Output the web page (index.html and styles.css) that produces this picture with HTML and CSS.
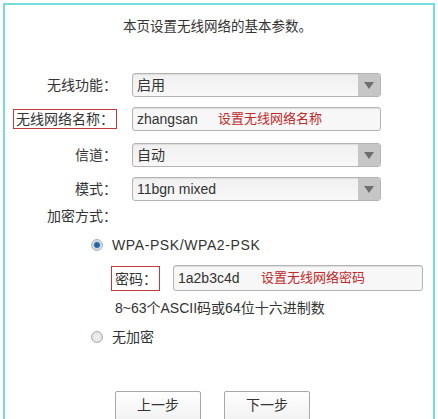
FILE: index.html
```html
<!DOCTYPE html>
<html lang="zh-CN">
  <head>
    <meta charset="UTF-8" />
    <title>无线设置</title>
    <link rel="stylesheet" href="styles.css">
  </head>
  <body>
    <section class="frame">
      <p class="intro">本页设置无线网络的基本参数。</p>
      <div class="form">
        <div class="row">
          <span class="label">无线功能：</span>
          <div class="select"><span>启用</span><i class="arrow"></i></div>
        </div>
        <div class="row">
          <span class="label"><b class="mark">无线网络名称：</b></span>
          <div class="input"><span class="val">zhangsan</span><span class="hint">设置无线网络名称</span></div>
        </div>
        <div class="row">
          <span class="label">信道：</span>
          <div class="select"><span>自动</span><i class="arrow"></i></div>
        </div>
        <div class="row">
          <span class="label">模式：</span>
          <div class="select"><span>11bgn mixed</span><i class="arrow"></i></div>
        </div>
        <div class="caption">加密方式：</div>
        <div class="radio-row">
          <i class="radio on"></i><span class="latin">WPA-PSK/WPA2-PSK</span>
        </div>
        <div class="pwd-row">
          <b class="mark">密码：</b>
          <div class="input wide"><span class="val short">1a2b3c4d</span><span class="hint">设置无线网络密码</span></div>
        </div>
        <div class="note">8~63个ASCII码或64位十六进制数</div>
        <div class="radio-row plain">
          <i class="radio"></i><span>无加密</span>
        </div>
      </div>
      <div class="buttons">
        <button>上一步</button>
        <button>下一步</button>
      </div>
    </section>
  </body>
</html>
```

FILE: styles.css
```css
* {
  margin: 0px;
  padding: 0px;
  box-sizing: border-box;
}
body {
  background-color: #fff;
  font-family: "Liberation Sans", "Noto Sans CJK SC", sans-serif;
  font-size: 14px;
  color: #333;
  line-height: 18px;
}
.frame {
  margin: 3px 3px 0 3px;
  height: 416px;
  border: 2px solid #74dcdc;
  border-bottom: none;
  overflow: hidden;
}
.intro {
  text-align: center;
  margin-top: 13px;
  padding-right: 3px;
  font-size: 13.5px;
}
.form {
  margin-top: 37px;
}
.row {
  display: flex;
  align-items: center;
  height: 24px;
  margin-bottom: 10px;
}
.label {
  width: 117px;
  flex-shrink: 0;
  text-align: right;
  padding-right: 5px;
}
.mark {
  font-weight: normal;
  border: 1px solid #c0393b;
  padding: 1px 2px 1px 2px;
}
.select, .input {
  width: 249px;
  height: 24px;
  margin-left: 10px;
  border: 1px solid #b4b4b4;
  border-radius: 3px;
  background: linear-gradient(#f0f0f0, #f8f8f8);
  display: flex;
  align-items: center;
  padding-left: 4px;
  box-shadow: inset 0 1px 1px #ddd;
}
.select span {
  flex: 1;
}
.arrow {
  width: 22px;
  height: 22px;
  background: #c6c6c6;
  position: relative;
}
.arrow::after {
  content: "";
  position: absolute;
  left: 6px;
  top: 8px;
  border-left: 5px solid transparent;
  border-right: 5px solid transparent;
  border-top: 7px solid #6e6e6e;
}
.input {
  background: #f7f7f7;
}
.val {
  width: 81px;
}
.val.short {
  width: 83px;
}
.hint {
  color: #c0282a;
  font-size: 13px;
}
.row:nth-child(2) {
  margin-bottom: 12px;
}
.row:nth-child(4) {
  margin-bottom: 6px;
}
.caption {
  margin-left: 42px;
  height: 18px;
}
.radio-row {
  display: flex;
  align-items: center;
  gap: 9px;
  margin: 11px 0 0 86px;
  height: 18px;
}
.latin {
  letter-spacing: 0.6px;
}
.radio {
  width: 12px;
  height: 12px;
  border-radius: 50%;
  border: 1px solid #a8b0b8;
  background: radial-gradient(#f4f4f4, #d8d8d8);
}
.radio.on {
  background: radial-gradient(#1f5f9a 0, #2c6ea8 2.5px, #c8d4de 3.5px, #e8eef2 6px);
}
.pwd-row {
  display: flex;
  align-items: center;
  margin: 11px 0 0 106px;
  height: 26px;
}
.pwd-row .mark {
  padding: 3px 2px 2px 3px;
}
.input.wide {
  width: 250px;
  height: 26px;
  margin-left: 13px;
}
.note {
  margin: 8px 0 0 110px;
}
.radio-row.plain {
  margin-top: 11px;
}
.buttons {
  display: flex;
  gap: 23px;
  margin: 45px 0 0 110px;
}
button {
  width: 86px;
  height: 30px;
  font-family: "Noto Sans CJK SC", sans-serif;
  font-size: 14px;
  color: #333;
  border: 1px solid #a8a8a8;
  border-radius: 2px;
  background: linear-gradient(#fefefe, #f2f2f2);
  padding-bottom: 4px;
}
```
